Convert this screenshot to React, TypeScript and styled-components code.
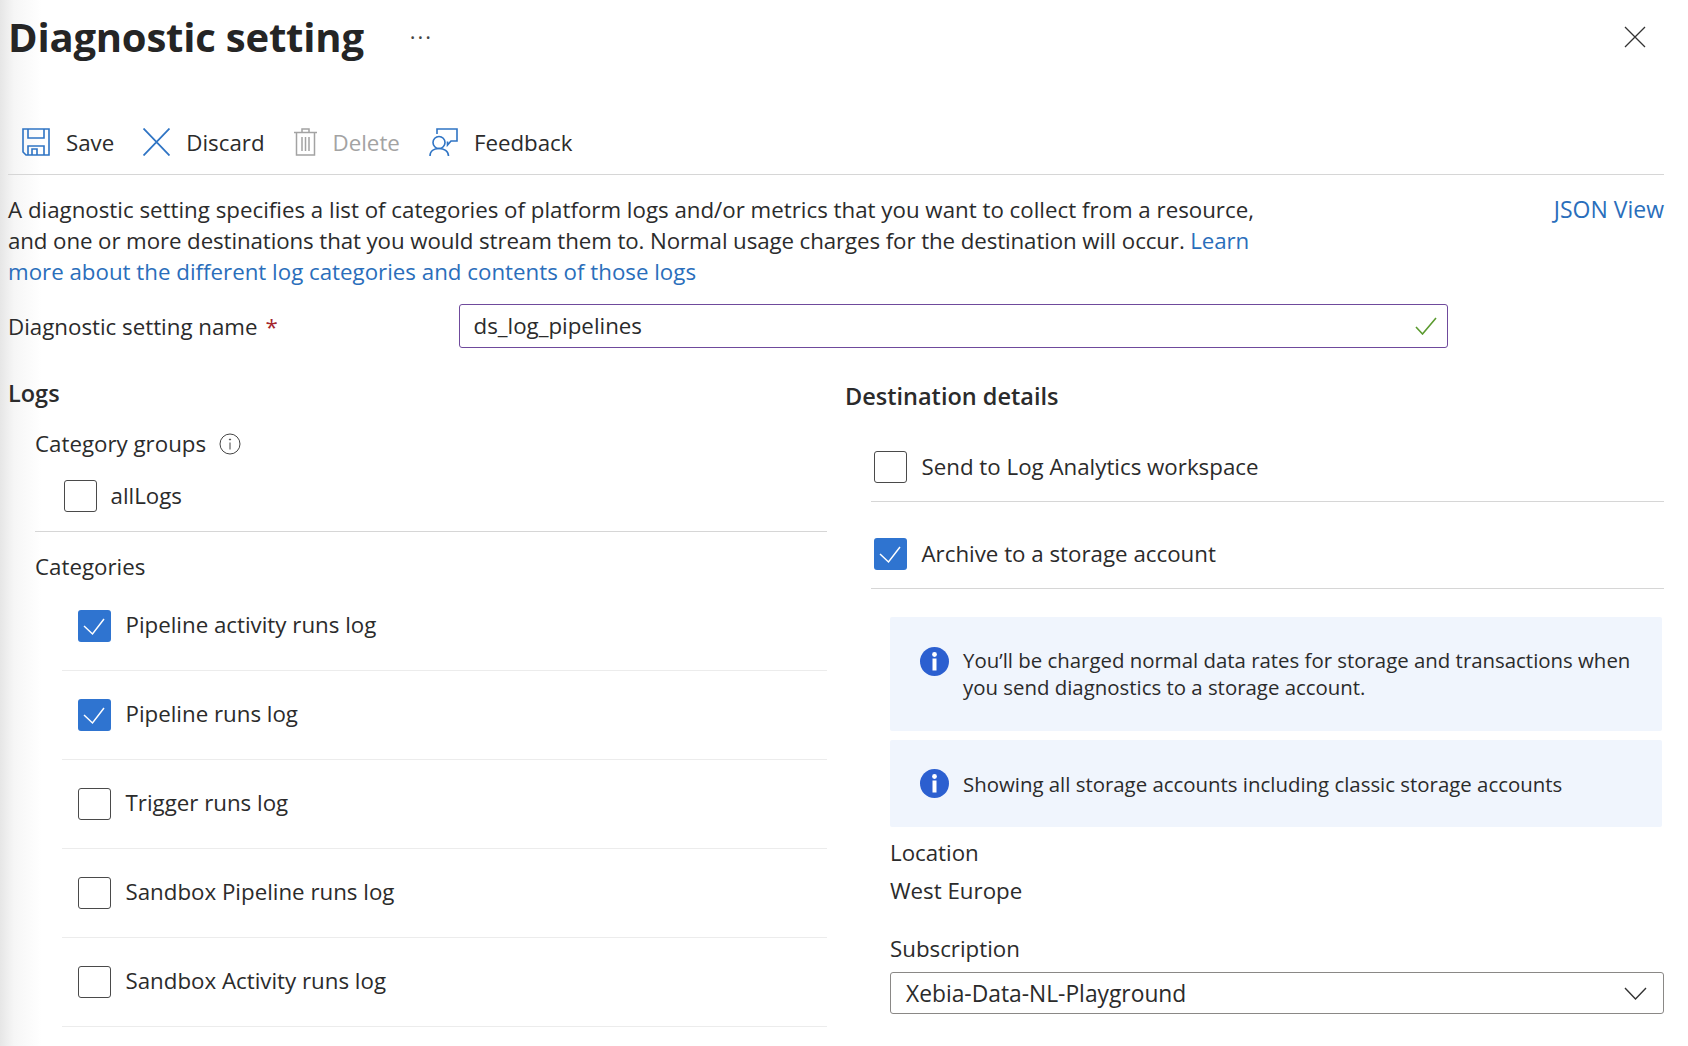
import React from 'react';
import styled, { createGlobalStyle } from 'styled-components';

/* Style Section */

const GlobalStyle = createGlobalStyle`
  html, body {
    margin: 0;
    padding: 0;
    background: #ffffff;
  }
  * {
    box-sizing: border-box;
  }
`;

const Page = styled.div`
  width: 1688px;
  height: 1046px;
  overflow: hidden;
  padding: 0 24px 0 8px;
  background: linear-gradient(90deg, #e6e6e6 0, #f6f6f6 14px, #ffffff 42px);
  color: #2b2b2b;
  font-family: 'Open Sans', 'Noto Sans', sans-serif;
  font-size: 22.3px;
  line-height: 31px;
`;

const TitleRow = styled.div`
  height: 74px;
  display: flex;
  align-items: center;
`;

const Title = styled.h1`
  margin: 0;
  font-size: 40px;
  line-height: 50px;
  font-weight: 700;
  color: #252525;
  letter-spacing: -0.2px;
`;

const Dots = styled.span`
  margin: 0 0 14px 46px;
  font-size: 22px;
  line-height: 20px;
  letter-spacing: 2px;
  color: #444444;
`;

const CloseButton = styled.button`
  margin-left: auto;
  margin-right: 18px;
  padding: 0;
  border: 0;
  background: none;
  display: flex;
`;

const Toolbar = styled.div`
  height: 101px;
  padding: 54px 0 0 14px;
  display: flex;
  align-items: flex-start;
  gap: 29px;
  border-bottom: 1px solid #d6d6d6;
`;

const ToolItem = styled.div<{ $disabled?: boolean }>`
  height: 28px;
  display: flex;
  align-items: center;
  gap: 16px;
  color: ${(p) => (p.$disabled ? '#a3a3a3' : '#2b2b2b')};
`;

const Description = styled.div`
  padding-top: 19px;
  display: flex;
  justify-content: space-between;
`;

const TightLine = styled.span`
  letter-spacing: -0.1px;
`;

const Link = styled.a`
  color: #2a6ebb;
`;

const JsonLink = styled(Link)`
  font-size: 23px;
`;

const NameRow = styled.div`
  margin-top: 17px;
  display: flex;
  align-items: center;
`;

const NameLabel = styled.label`
  width: 450.5px;
`;

const Required = styled.span`
  margin-left: 8px;
  color: #a4262c;
`;

const NameField = styled.div`
  width: 989px;
  height: 44px;
  padding: 0 10px 0 14px;
  display: flex;
  align-items: center;
  border: 1.5px solid #6f4a9c;
  border-radius: 3px;
`;

const NameInput = styled.input`
  flex: 1;
  margin-bottom: 2px;
  border: 0;
  outline: 0;
  padding: 0;
  background: none;
  color: #2b2b2b;
  font: inherit;
`;

const Columns = styled.div`
  margin-top: 30px;
  display: grid;
  grid-template-columns: 819px 819px;
  column-gap: 18px;
`;

const SectionTitle = styled.div`
  font-size: 23.5px;
  font-weight: 600;
`;

const LogsBody = styled.div`
  margin-left: 27px;
`;

const GroupLabel = styled.div`
  margin-top: 19px;
  display: flex;
  align-items: center;
  gap: 13px;
`;

const AllLogsRow = styled.div`
  margin-top: 21px;
  padding: 0 0 19px 29px;
  display: flex;
  align-items: center;
  gap: 14px;
  border-bottom: 1px solid #d6d6d6;
`;

const CategoriesLabel = styled.div`
  margin-top: 19px;
`;

const CategoryRow = styled.div`
  height: 89px;
  margin-left: 27px;
  padding-left: 16px;
  display: flex;
  align-items: center;
  gap: 15px;
  border-bottom: 1px solid #ececec;
`;

const RowText = styled.span<{ $lift: number }>`
  margin-bottom: ${(p) => p.$lift}px;
  line-height: 26px;
`;

const Box = styled.span<{ $checked?: boolean }>`
  flex: none;
  width: 32.5px;
  height: 32px;
  display: flex;
  border-radius: 3px;
  border: ${(p) => (p.$checked ? '0' : '1px solid #4a4a4a')};
  background: ${(p) => (p.$checked ? '#2f74d0' : '#ffffff')};
`;

const DestColumn = styled.div`
  padding-top: 3px;
`;

const DestRow = styled.div<{ $first?: boolean }>`
  margin-left: 26px;
  padding: ${(p) => (p.$first ? '39px 0 18px 3px' : '36px 0 18px 3px')};
  display: flex;
  align-items: center;
  gap: 15px;
  border-bottom: 1px solid #d6d6d6;
`;

const DestBody = styled.div`
  margin-left: 45px;
`;

const InfoBox = styled.div<{ $single?: boolean }>`
  width: 772px;
  height: ${(p) => (p.$single ? '87px' : '114px')};
  margin-top: ${(p) => (p.$single ? '9px' : '28px')};
  padding: ${(p) => (p.$single ? '0 30px' : '30px 30px 0')};
  display: flex;
  align-items: ${(p) => (p.$single ? 'center' : 'flex-start')};
  gap: 14px;
  border-radius: 2px;
  background: #f0f5fd;
  font-size: 20.4px;
  line-height: 27px;
`;

const InfoText = styled.div<{ $single?: boolean }>`
  margin-top: ${(p) => (p.$single ? '2px' : '0')};
`;

const FieldLabel = styled.div<{ $gap: number }>`
  margin-top: ${(p) => p.$gap}px;
`;

const SelectBox = styled.div`
  height: 42px;
  margin-top: 8px;
  padding: 0 16px 0 15px;
  display: flex;
  align-items: center;
  justify-content: space-between;
  border: 1px solid #8a8886;
  border-radius: 3px;
  font-size: 22.8px;
`;

/* Icons */

const BLUE = '#2f74c4';

const SaveIcon = () => (
  <svg width="28" height="28" viewBox="0 0 28 28" fill="none" stroke={BLUE} strokeWidth="1.6">
    <path d="M1 1H27V27H4L1 24Z" />
    <path d="M6 1V10H22V1" />
    <path d="M6 27V18H22V27" />
    <path d="M10 27V21H15V27" />
  </svg>
);

const DiscardIcon = () => (
  <svg width="27" height="28" viewBox="0 0 27 28" fill="none" stroke={BLUE} strokeWidth="1.8">
    <path d="M0.500 0.500L26.500 27.500M26.500 0.500L0.500 27.500" />
  </svg>
);

const DeleteIcon = () => (
  <svg width="23" height="28" viewBox="0 0 23 28" fill="none" stroke="#a3a3a3" strokeWidth="1.5">
    <path d="M8 4V1H15V4" />
    <path d="M0 4.500H23" />
    <path d="M2.500 4.500V27H20.500V4.500" />
    <path d="M8 9V23M11.500 9V23M15 9V23" />
  </svg>
);

const FeedbackIcon = () => (
  <svg width="29" height="28" viewBox="0 0 29 28" fill="none" stroke={BLUE} strokeWidth="1.6">
    <path d="M8 6V1H28V13H22L18.500 17V13.500" />
    <circle cx="10" cy="14.500" r="6" />
    <path d="M1 28C1 23 5 20.500 10 20.500S19.500 23 19.500 28" />
  </svg>
);

const CloseIcon = () => (
  <svg width="22" height="22" viewBox="0 0 22 22" fill="none" stroke="#333333" strokeWidth="1.3">
    <path d="M1 1L21 21M21 1L1 21" />
  </svg>
);

const GreenCheck = () => (
  <svg width="22" height="18" viewBox="0 0 22 18" fill="none" stroke="#5b9a2f" strokeWidth="1.6">
    <path d="M1 10L7.500 17L21 1" />
  </svg>
);

const OutlineInfo = () => (
  <svg width="22" height="22" viewBox="0 0 22 22" fill="none" stroke="#444444" strokeWidth="1">
    <circle cx="11" cy="11" r="10" />
    <path d="M11 9.500V16.500" />
    <circle cx="11" cy="6.500" r="0.6" fill="#444444" />
  </svg>
);

const FilledInfo = () => (
  <svg width="29" height="29" viewBox="0 0 29 29" style={{ flex: 'none' }}>
    <circle cx="14.500" cy="14.500" r="14.500" fill="#2b5fd0" />
    <rect x="12.500" y="11.500" width="4" height="12" fill="#ffffff" />
    <circle cx="14.500" cy="7.500" r="2.400" fill="#ffffff" />
  </svg>
);

const Chevron = () => (
  <svg width="23" height="13" viewBox="0 0 23 13" fill="none" stroke="#333333" strokeWidth="1.4">
    <path d="M1 1L11.500 12L22 1" />
  </svg>
);

const CheckBox: React.FC<{ checked?: boolean }> = ({ checked }) => (
  <Box $checked={checked}>
    {checked && (
      <svg width="32" height="32" viewBox="0 0 32 32" fill="none" stroke="#ffffff" strokeWidth="1.5">
        <path d="M6 16L14.500 24L26 9" />
      </svg>
    )}
  </Box>
);

const categories = [
  { name: 'Pipeline activity runs log', checked: true },
  { name: 'Pipeline runs log', checked: true },
  { name: 'Trigger runs log', checked: false },
  { name: 'Sandbox Pipeline runs log', checked: false },
  { name: 'Sandbox Activity runs log', checked: false },
];

const App: React.FC = () => {
  return (
    <Page>
      <GlobalStyle />
      <TitleRow>
        <Title>Diagnostic setting</Title>
        <Dots>...</Dots>
        <CloseButton>
          <CloseIcon />
        </CloseButton>
      </TitleRow>

      <Toolbar>
        <ToolItem>
          <SaveIcon />
          Save
        </ToolItem>
        <ToolItem>
          <DiscardIcon />
          Discard
        </ToolItem>
        <ToolItem $disabled>
          <DeleteIcon />
          Delete
        </ToolItem>
        <ToolItem>
          <FeedbackIcon />
          Feedback
        </ToolItem>
      </Toolbar>

      <Description>
        <div>
          A diagnostic setting specifies a list of categories of platform logs and/or metrics that you want to collect from a resource,
          <br />
          <TightLine>
            and one or more destinations that you would stream them to. Normal usage charges for the destination will occur. <Link>Learn</Link>
          </TightLine>
          <br />
          <Link>more about the different log categories and contents of those logs</Link>
        </div>
        <JsonLink>JSON View</JsonLink>
      </Description>

      <NameRow>
        <NameLabel>
          Diagnostic setting name<Required>*</Required>
        </NameLabel>
        <NameField>
          <NameInput readOnly value="ds_log_pipelines" />
          <GreenCheck />
        </NameField>
      </NameRow>

      <Columns>
        <div>
          <SectionTitle>Logs</SectionTitle>
          <LogsBody>
            <GroupLabel>
              Category groups
              <OutlineInfo />
            </GroupLabel>
            <AllLogsRow>
              <CheckBox />
              <RowText $lift={1}>allLogs</RowText>
            </AllLogsRow>
            <CategoriesLabel>Categories</CategoriesLabel>
            {categories.map((category) => (
              <CategoryRow key={category.name}>
                <CheckBox checked={category.checked} />
                <RowText $lift={3}>{category.name}</RowText>
              </CategoryRow>
            ))}
          </LogsBody>
        </div>

        <DestColumn>
          <SectionTitle>Destination details</SectionTitle>
          <DestRow $first>
            <CheckBox />
            <RowText $lift={1}>Send to Log Analytics workspace</RowText>
          </DestRow>
          <DestRow>
            <CheckBox checked />
            <RowText $lift={1}>Archive to a storage account</RowText>
          </DestRow>
          <DestBody>
            <InfoBox>
              <FilledInfo />
              <InfoText>
                You’ll be charged normal data rates for storage and transactions when
                <br />
                you send diagnostics to a storage account.
              </InfoText>
            </InfoBox>
            <InfoBox $single>
              <FilledInfo />
              <InfoText $single>Showing all storage accounts including classic storage accounts</InfoText>
            </InfoBox>
            <FieldLabel $gap={10}>Location</FieldLabel>
            <FieldLabel $gap={7}>West Europe</FieldLabel>
            <FieldLabel $gap={27}>Subscription</FieldLabel>
            <SelectBox>
              Xebia-Data-NL-Playground
              <Chevron />
            </SelectBox>
          </DestBody>
        </DestColumn>
      </Columns>
    </Page>
  );
};

export default App;
